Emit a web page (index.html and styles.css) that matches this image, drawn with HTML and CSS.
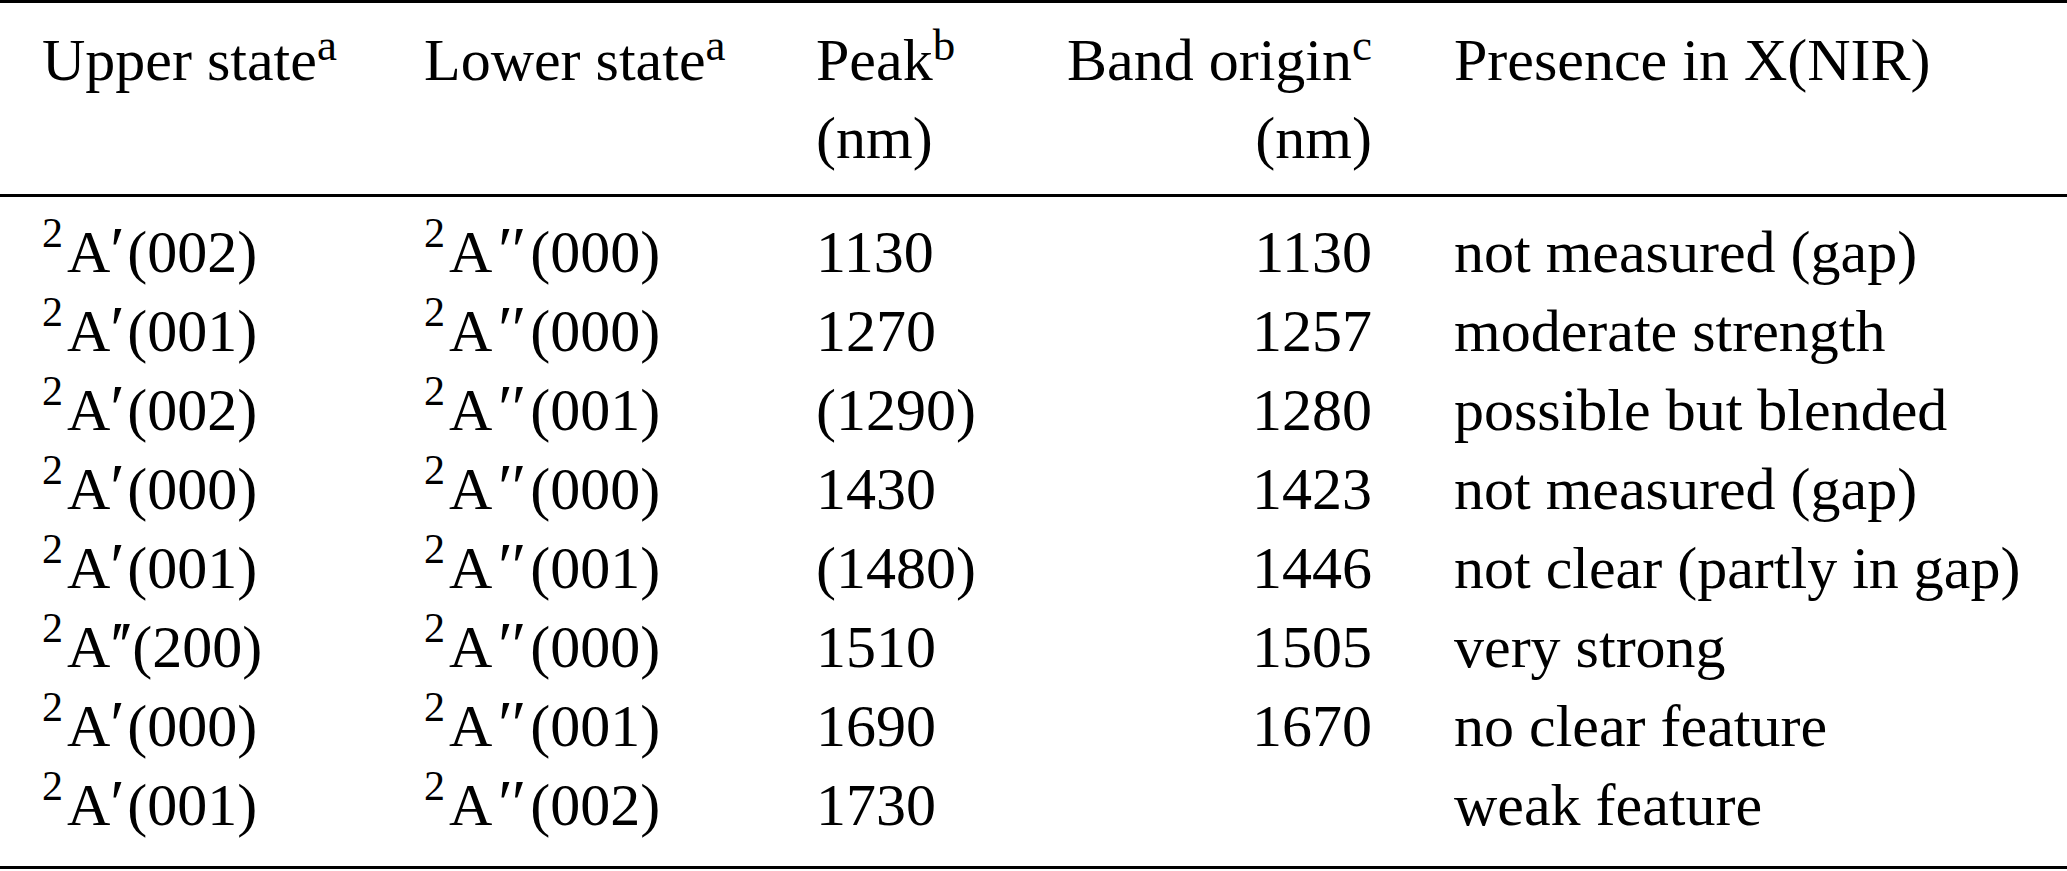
FILE: index.html
```html
<!DOCTYPE html>
<html lang="en">
<head>
    <meta charset="UTF-8">
    <meta name="viewport" content="width=device-width, initial-scale=1.0">
    <title>Electronic transitions</title>
    <link rel="stylesheet" href="styles.css">
</head>
<body>

<table class="bands">
    <colgroup>
        <col class="colUpper">
        <col class="colLower">
        <col class="colPeak">
        <col class="colOrigin">
        <col class="colPresence">
    </colgroup>
    <thead>
        <tr>
            <th class="first">Upper state<sup>a</sup></th>
            <th>Lower state<sup>a</sup></th>
            <th>Peak<sup>b</sup><br>(nm)</th>
            <th class="num">Band origin<sup>c</sup><br>(nm)</th>
            <th class="last">Presence in X(NIR)</th>
        </tr>
    </thead>
    <tbody>
        <tr>
            <td class="first"><sup class="term">2</sup>A<span class="prime">′</span>(002)</td>
            <td><sup class="term">2</sup>A<span class="prime2">′′</span>(000)</td>
            <td>1130</td>
            <td class="num">1130</td>
            <td class="last">not measured (gap)</td>
        </tr>
        <tr>
            <td class="first"><sup class="term">2</sup>A<span class="prime">′</span>(001)</td>
            <td><sup class="term">2</sup>A<span class="prime2">′′</span>(000)</td>
            <td>1270</td>
            <td class="num">1257</td>
            <td class="last">moderate strength</td>
        </tr>
        <tr>
            <td class="first"><sup class="term">2</sup>A<span class="prime">′</span>(002)</td>
            <td><sup class="term">2</sup>A<span class="prime2">′′</span>(001)</td>
            <td>(1290)</td>
            <td class="num">1280</td>
            <td class="last">possible but blended</td>
        </tr>
        <tr>
            <td class="first"><sup class="term">2</sup>A<span class="prime">′</span>(000)</td>
            <td><sup class="term">2</sup>A<span class="prime2">′′</span>(000)</td>
            <td>1430</td>
            <td class="num">1423</td>
            <td class="last">not measured (gap)</td>
        </tr>
        <tr>
            <td class="first"><sup class="term">2</sup>A<span class="prime">′</span>(001)</td>
            <td><sup class="term">2</sup>A<span class="prime2">′′</span>(001)</td>
            <td>(1480)</td>
            <td class="num">1446</td>
            <td class="last">not clear (partly in gap)</td>
        </tr>
        <tr>
            <td class="first"><sup class="term">2</sup>A<span class="prime2 tight">′′</span>(200)</td>
            <td><sup class="term">2</sup>A<span class="prime2">′′</span>(000)</td>
            <td>1510</td>
            <td class="num">1505</td>
            <td class="last">very strong</td>
        </tr>
        <tr>
            <td class="first"><sup class="term">2</sup>A<span class="prime">′</span>(000)</td>
            <td><sup class="term">2</sup>A<span class="prime2">′′</span>(001)</td>
            <td>1690</td>
            <td class="num">1670</td>
            <td class="last">no clear feature</td>
        </tr>
        <tr>
            <td class="first"><sup class="term">2</sup>A<span class="prime">′</span>(001)</td>
            <td><sup class="term">2</sup>A<span class="prime2">′′</span>(002)</td>
            <td>1730</td>
            <td class="num"></td>
            <td class="last">weak feature</td>
        </tr>
    </tbody>
</table>

</body>
</html>
```

FILE: styles.css
```css
body {
    margin: 0;
    background-color: #fff;
    color: #000;
    font-family: "Liberation Serif", "Times New Roman", serif;
}
.bands {
    width: 2067px;
    border-collapse: collapse;
    table-layout: fixed;
    font-size: 60px;
    border-top: 3px solid #000;
    border-bottom: 3px solid #000;
}
.colUpper {
    width: 424px;
}
.colLower {
    width: 392px;
}
.colPeak {
    width: 240px;
}
.colOrigin {
    width: 316px;
}
th, td {
    padding: 0;
    text-align: left;
    vertical-align: top;
    white-space: nowrap;
}
th {
    font-weight: normal;
    line-height: 78px;
    padding-top: 18px;
    padding-bottom: 17px;
    border-bottom: 3px solid #000;
}
td {
    line-height: 79px;
}
tbody tr:first-child td {
    padding-top: 16px;
}
tbody tr:last-child td {
    padding-bottom: 21px;
}
.first {
    padding-left: 42px;
}
.num {
    text-align: right;
}
.last {
    padding-left: 82px;
}
sup {
    font-size: 0.75em;
    line-height: 0;
    vertical-align: 0.45em;
}
sup.term {
    font-size: 0.7em;
    vertical-align: 0.6em;
    padding-right: 4px;
}
.prime, .prime2 {
    display: inline-block;
    font-size: 1.1em;
    line-height: 0;
    letter-spacing: -2px;
}
.prime {
    width: 17px;
}
.prime2 {
    width: 38px;
    padding-left: 6px;
    box-sizing: border-box;
    letter-spacing: -1px;
}
.prime2.tight {
    width: 22px;
    padding-left: 0;
    letter-spacing: -6px;
}
```
